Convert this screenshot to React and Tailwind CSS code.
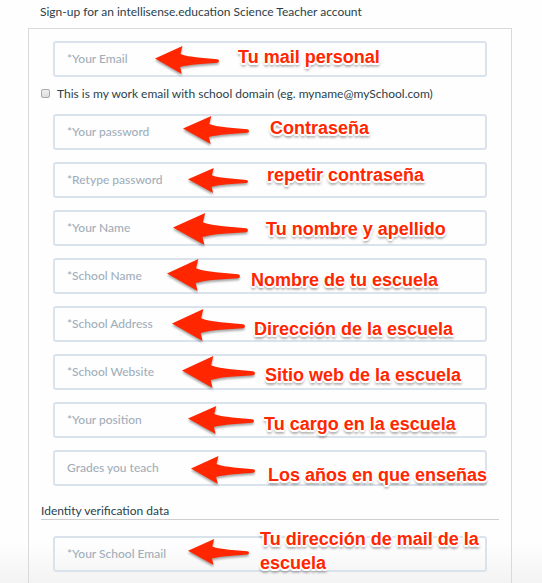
import React from "react";

const personalFields = [
  { id: "password", label: "*Your password", type: "password", note: "Contraseña", noteAt: "left-[217px] top-[2px]", arrowAt: "left-[130px] top-[2px] w-[66px] h-7" },
  { id: "retype", label: "*Retype password", type: "password", note: "repetir contraseña", noteAt: "left-[214px] top-[1px]", arrowAt: "left-[135px] top-[6px] w-[60px] h-[25px]" },
  { id: "name", label: "*Your Name", type: "text", note: "Tu nombre y apellido", noteAt: "left-[213px] top-[7px]", arrowAt: "left-[120px] top-[3px] w-[75px] h-8" },
  { id: "school-name", label: "*School Name", type: "text", note: "Nombre de tu escuela", noteAt: "left-[198px] top-[10px]", arrowAt: "left-[114px] top-[1px] w-[73px] h-8" },
  { id: "school-address", label: "*School Address", type: "text", note: "Dirección de la escuela", noteAt: "left-[201px] top-[11px]", arrowAt: "left-[119px] top-[3px] w-[73px] h-8" },
  { id: "school-website", label: "*School Website", type: "text", note: "Sitio web de la escuela", noteAt: "left-[212px] top-[9px]", arrowAt: "left-[129px] top-[2px] w-[73px] h-8" },
  { id: "position", label: "*Your position", type: "text", note: "Tu cargo en la escuela", noteAt: "left-[211px] top-[10px]", arrowAt: "left-[135px] top-[4px] w-[66px] h-7" },
  { id: "grades", label: "Grades you teach", type: "text", note: "Los años en que enseñas", noteAt: "left-[215px] top-[13px]", arrowAt: "left-[138px] top-[6px] w-16 h-7" },
];

function Arrow({ className }) {
  return (
    <svg
      viewBox="0 0 191 80"
      preserveAspectRatio="none"
      aria-hidden="true"
      className={`pointer-events-none absolute overflow-visible drop-shadow-[0_2px_1px_rgba(0,0,0,0.35)] ${className}`}
    >
      <path
        fill="#ff2600"
        d="M0 36 L82 0 L76 23 C90 29 108 30 128 33 L186 38 Q191 39 191 43 Q191 47 186 48 L128 52 C106 54 90 56 75 60 L80 80 Z"
      />
    </svg>
  );
}

function Field({ id, label, type, note, noteAt, arrowAt }) {
  return (
    <div className="relative">
      <input
        id={id}
        type={type}
        aria-label={label}
        placeholder={label}
        className="block h-9 w-full rounded-[3px] border-2 border-[#dae3ec] bg-transparent px-3 pb-[2px] text-xs font-medium text-[#2b3e4a] outline-none placeholder:text-[#a2aeba] placeholder:opacity-100"
      />
      <Arrow className={arrowAt} />
      <span
        className={`pointer-events-none absolute whitespace-pre font-['Liberation_Sans',Arial,sans-serif] text-lg leading-6 font-bold text-[#ff2600] [text-shadow:1px_0_0_#fff,-1px_0_0_#fff,0_1px_0_#fff,0_-1px_0_#fff,2px_0_1px_#fff,-2px_0_1px_#fff,0_2px_1px_#fff,0_-2px_1px_#fff,1px_2px_1px_#fff,-1px_2px_1px_#fff,0_3px_3px_rgba(0,0,0,0.7)] ${noteAt}`}
      >
        {note}
      </span>
    </div>
  );
}

export default function App() {
  return (
    <main className="flex min-h-screen flex-col overflow-hidden bg-[linear-gradient(to_bottom,#fefefe_calc(100%-40px),#f3f3f3)] pr-[30px] pl-7 font-[Lato,'Open_Sans',sans-serif] text-xs text-[#2b3e4a]">
      <h1 className="h-7 px-3 leading-6">Sign-up for an intellisense.education Science Teacher account</h1>
      <form className="flex-1 border border-b-0 border-[#d9dadc] px-3 pt-3">
        <div className="px-3">
          <Field
            id="email"
            label="*Your Email"
            type="email"
            note="Tu mail personal"
            noteAt="left-[185px] top-[4px]"
            arrowAt="left-[102px] top-[5px] w-16 h-7"
          />
        </div>
        <label className="flex items-center gap-[7px] pt-2 pb-3 leading-[17px]">
          <input
            type="checkbox"
            className="size-[9px] shrink-0 appearance-none rounded-[2px] border border-[#a9a9a9] bg-linear-to-b from-[#f0f0f0] to-[#dcdcdc] checked:bg-[#2b3e4a]"
          />
          This is my work email with school domain (eg. myname@mySchool.com)
        </label>
        <div className="flex flex-col gap-3 px-3">
          {personalFields.map((field) => (
            <Field key={field.id} {...field} />
          ))}
        </div>
        <h2 className="my-4 border-b border-[#cfcfcf] leading-[17px]">Identity verification data</h2>
        <div className="px-3">
          <Field
            id="school-email"
            label="*Your School Email"
            type="email"
            note={"Tu dirección de mail de la\nescuela"}
            noteAt="left-[207px] -top-[9px]"
            arrowAt="left-[135px] top-[3px] w-[61px] h-[26px]"
          />
        </div>
      </form>
    </main>
  );
}
